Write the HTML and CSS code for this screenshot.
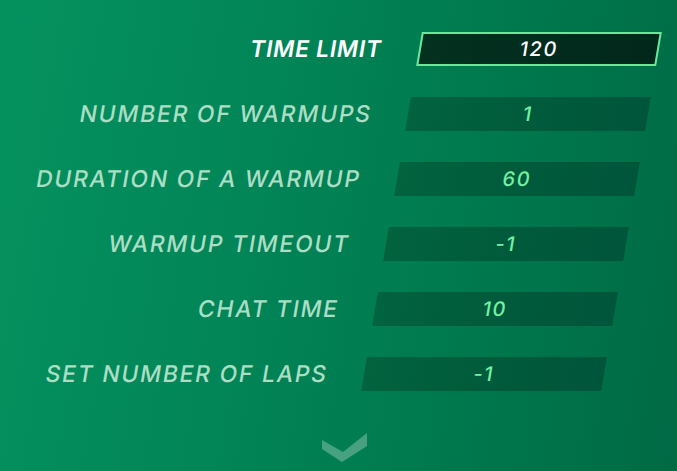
FILE: index.html
```html
<!DOCTYPE html>
<html lang="en">
<head>
<meta charset="utf-8">
<title>Race settings</title>
<link rel="stylesheet" href="styles.css">
</head>
<body>
<main class="screen">
  <div class="ghost">TRACK CUSTOM NUMBER</div>
  <ul class="settings">
    <li class="row active"><span class="label">TIME LIMIT</span><span class="field">120</span></li>
    <li class="row"><span class="label">NUMBER OF WARMUPS</span><span class="field">1</span></li>
    <li class="row"><span class="label">DURATION OF A WARMUP</span><span class="field">60</span></li>
    <li class="row"><span class="label">WARMUP TIMEOUT</span><span class="field">-1</span></li>
    <li class="row"><span class="label">CHAT TIME</span><span class="field">10</span></li>
    <li class="row"><span class="label">SET NUMBER OF LAPS</span><span class="field">-1</span></li>
  </ul>
  <div class="more">
    <svg width="46" height="30" viewBox="0 0 46 30" aria-hidden="true">
      <polygon points="0,7 21,19 45,0 45,13 20,29 0,16" fill="#ffffff" fill-opacity="0.28"/>
    </svg>
  </div>
</main>
</body>
</html>
```

FILE: styles.css
```css
html, body {
  margin: 0;
  padding: 0;
}

body {
  width: 677px;
  height: 471px;
  overflow: hidden;
  font-family: "Inter", "Liberation Sans", sans-serif;
}

.screen {
  position: relative;
  width: 677px;
  height: 471px;
  overflow: hidden;
  background: linear-gradient(100deg, #05925f 0%, #028658 35%, #007a4f 65%, #006a45 100%);
  display: flex;
  flex-direction: column;
}

.ghost {
  position: absolute;
  left: 100px;
  top: 318px;
  font-size: 34px;
  font-weight: 800;
  letter-spacing: 1px;
  color: rgba(0, 60, 30, 0.025);
  transform: skewX(-10deg);
  white-space: nowrap;
}

.settings {
  list-style: none;
  margin: 0;
  padding: 32px 0 0 0;
  display: flex;
  flex-direction: column;
  gap: 31px;
  transform: skewX(-9.6deg);
  transform-origin: 0 49px;
  position: relative;
}

.row {
  display: flex;
  align-items: center;
  height: 34px;
}

.label {
  width: 383px;
  text-align: right;
  font-size: 23px;
  font-weight: 500;
  letter-spacing: 1.7px;
  color: #abdec4;
  white-space: nowrap;
  margin-right: 36px;
}

.field {
  width: 240px;
  height: 34px;
  box-sizing: border-box;
  display: flex;
  align-items: center;
  justify-content: center;
  background: linear-gradient(90deg, #02633f 0%, #005a3b 55%, #00553a 100%);
  color: #74f0a2;
  font-size: 20px;
  font-weight: 500;
  letter-spacing: 1.5px;
}

.row.active .label {
  color: #ffffff;
  font-weight: 600;
  letter-spacing: 0.7px;
  width: 382px;
  margin-right: 37px;
}

.row.active .field {
  background: linear-gradient(90deg, #03301f 0%, #02281c 100%);
  border: 2px solid #6ce69c;
  color: #ffffff;
}

.more {
  display: flex;
  margin: 42px 0 0 322px;
}
```
